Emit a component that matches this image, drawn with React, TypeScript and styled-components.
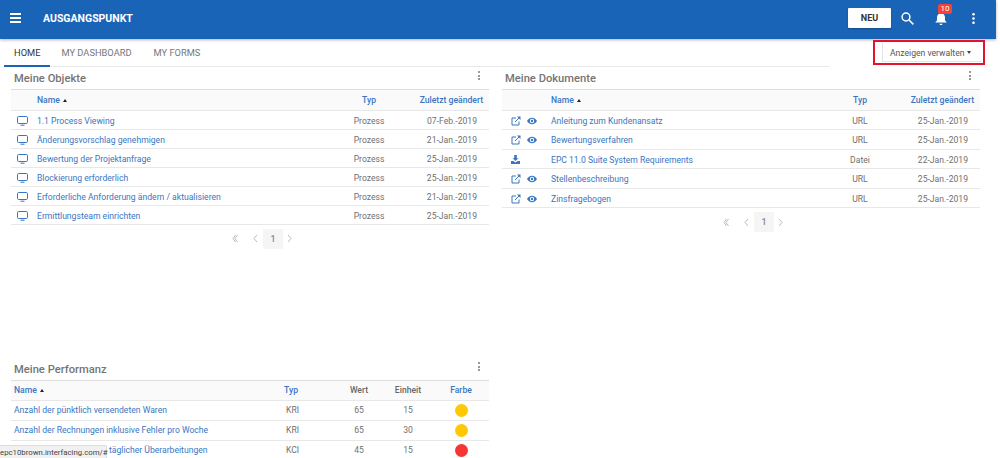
import React from "react";
import styled, { createGlobalStyle } from "styled-components";

const Global = createGlobalStyle`
  html, body { margin: 0; padding: 0; height: 458px; overflow: hidden; background: #fff; }
  body { font-family: Roboto, "Liberation Sans", sans-serif; }
  * { box-sizing: border-box; }
`;

const Page = styled.div`
  position: relative;
  width: 1000px;
  height: 458px;
  overflow: hidden;
`;

const Header = styled.header`
  width: 996px;
  height: 39px;
  background: #1a64b7;
  box-shadow: 0 1px 3px rgba(0, 0, 0, 0.3);
  display: flex;
  align-items: center;
  padding: 0 21px 3px 10px;
  color: #fff;
`;

const Burger = styled.div`
  width: 11px;
  display: flex;
  flex-direction: column;
  gap: 2px;
  span { display: block; height: 2px; background: #fff; }
`;

const Brand = styled.div`
  margin-left: 22px;
  font-size: 10.5px;
  font-weight: 700;
  flex: 1;
`;

const NewButton = styled.button`
  width: 43px;
  height: 20px;
  background: #fff;
  border: 0;
  border-radius: 1px;
  font: 700 9px Roboto, sans-serif;
  color: #333;
  padding: 0;
  box-shadow: 0 1px 2px rgba(0, 0, 0, 0.25);
`;

const IconSlot = styled.div<{ $ml: number }>`
  position: relative;
  margin-left: ${(p) => p.$ml}px;
  display: flex;
  svg { display: block; }
`;

const Badge = styled.span`
  position: absolute;
  top: -7px;
  left: 3px;
  width: 14px;
  height: 10px;
  background: #f44336;
  border-radius: 2px;
  color: #fff;
  font-size: 8px;
  line-height: 10px;
  text-align: center;
`;

const TabRow = styled.div`
  height: 28px;
  display: flex;
  align-items: stretch;
  padding-left: 4px;
`;

const Tabs = styled.nav`
  width: 825px;
  height: 28px;
  display: flex;
  border-bottom: 1px solid #e8e8e8;
`;

const Tab = styled.div<{ $active?: boolean }>`
  font-size: 9.3px;
  height: 28px;
  line-height: 27px;
  padding: 0 ${(p) => (p.$active ? 10 : 11)}px;
  color: ${(p) => (p.$active ? "#333" : "#777")};
  border-bottom: ${(p) => (p.$active ? "2px solid #1a64b7" : "none")};
`;

const ManageWrap = styled.div`
  position: absolute;
  left: 873px;
  top: 40px;
  width: 112px;
  height: 25px;
  border: 2px solid #e6112a;
  display: flex;
  align-items: center;
  padding-left: 7px;
  font-size: 8.6px;
  color: #555;
  white-space: nowrap;
  &::before {
    content: "";
    position: absolute;
    left: 7px;
    top: 1px;
    bottom: 1px;
    width: 1px;
    background: #e4e4e4;
  }
  &::after {
    content: "";
    position: absolute;
    left: 7px;
    right: 1px;
    bottom: 1px;
    height: 1px;
    background: #e4e4e4;
  }
`;

const ManageLabel = styled.span`
  margin-left: 8px;
`;

const Caret = styled.i`
  display: inline-block;
  margin-left: 3px;
  border-left: 2.5px solid transparent;
  border-right: 2.5px solid transparent;
  border-top: 3px solid #444;
`;

const Grid = styled.main`
  display: grid;
  grid-template-columns: 478px 478px;
  column-gap: 13px;
  padding-left: 11px;
`;

const Panel = styled.section<{ $h: number }>`
  height: ${(p) => p.$h}px;
`;

const PanelHead = styled.div`
  height: 23px;
  display: flex;
  align-items: center;
  justify-content: space-between;
  padding: 0 9px 0 3px;
  border-bottom: 1px solid #ddd;
  box-shadow: 0 1px 0 #e8e8e8;
`;

const PanelTitle = styled.h2`
  margin: 0;
  font-size: 11.2px;
  font-weight: 500;
  color: #757575;
`;

const Dots = styled.span`
  display: flex;
  flex-direction: column;
  gap: 1.5px;
  margin-top: -5px;
  i { width: 2px; height: 2px; background: #999; display: block; }
`;

const Table = styled.table`
  width: 100%;
  border-collapse: collapse;
  table-layout: fixed;
  font-size: 8.6px;
`;

const Th = styled.th<{ $align?: string; $w?: number; $plain?: boolean; $h: number; $pl?: number; $pr?: number }>`
  height: ${(p) => p.$h}px;
  width: ${(p) => (p.$w ? `${p.$w}px` : "auto")};
  text-align: ${(p) => p.$align ?? "left"};
  padding: 0 ${(p) => p.$pr ?? 0}px 0 ${(p) => p.$pl ?? 0}px;
  background: #fafafa;
  color: ${(p) => (p.$plain ? "#666" : "#3a75c2")};
  font-weight: 500;
  border-bottom: 1px solid #e8e8e8;
  white-space: nowrap;
`;

const Td = styled.td<{ $align?: string; $h: number; $pl?: number; $pr?: number; $link?: boolean; $nudge?: number }>`
  height: ${(p) => p.$h}px;
  text-align: ${(p) => p.$align ?? "left"};
  padding: ${(p) => p.$nudge ?? 0}px ${(p) => p.$pr ?? 0}px 0 ${(p) => p.$pl ?? 0}px;
  color: ${(p) => (p.$link ? "#3a75c2" : "#707070")};
  border-bottom: 1px solid #e8e8e8;
  white-space: nowrap;
  overflow: hidden;
`;

const Sort = styled.i`
  display: inline-block;
  margin-left: 1px;
  vertical-align: 1px;
  border-left: 2.5px solid transparent;
  border-right: 2.5px solid transparent;
  border-bottom: 3px solid #222;
`;

const Pager = styled.div<{ $right: number }>`
  display: flex;
  justify-content: flex-end;
  align-items: center;
  margin-top: 4px;
  height: 20px;
  padding-right: ${(p) => p.$right}px;
  color: #bbb;
`;

const PageNum = styled.span`
  width: 20px;
  height: 20px;
  margin: 0 4px 0 5px;
  background: #f5f5f5;
  color: #888;
  font-size: 9px;
  font-weight: 500;
  text-align: center;
  line-height: 20px;
`;

const Dot = styled.span<{ $c: string }>`
  display: inline-block;
  width: 13px;
  height: 13px;
  border-radius: 50%;
  background: ${(p) => p.$c};
  vertical-align: middle;
`;

const IconRow = styled.span`
  display: flex;
  align-items: center;
  gap: 6px;
`;

const StatusTip = styled.div`
  position: absolute;
  left: 0;
  bottom: 0;
  width: 107px;
  height: 13px;
  background: #f1f1f1;
  border: 1px solid #ddd;
  border-left: 0;
  border-bottom: 0;
  border-radius: 0 2px 0 0;
  font-size: 7.8px;
  line-height: 10px;
  color: #444;
  white-space: nowrap;
  text-align: right;
  padding: 2px 2px 0 0;
`;

const Monitor = () => (
  <svg width="11" height="10" viewBox="0 0 11 10" fill="none" stroke="#3a75c2" strokeWidth="1" style={{ display: "block" }}>
    <rect x="0.5" y="0.5" width="10" height="7" rx="1.2" />
    <path d="M3.5 9.2h4" />
  </svg>
);

const External = () => (
  <svg width="10" height="10" viewBox="0 0 10 10" fill="none" stroke="#3a75c2" strokeWidth="1">
    <path d="M5 2H1v7h7V5.5" />
    <path d="M4 6l4-4" />
    <path d="M6 .5h3.5V4z" fill="#3a75c2" stroke="none" />
  </svg>
);

const Eye = () => (
  <svg width="10" height="8" viewBox="0 0 10 8" fill="#3a75c2">
    <path d="M5 .8C2.8.8 1 2.2 0 4c1 1.8 2.8 3.2 5 3.2S9 5.8 10 4C9 2.2 7.2.8 5 .8zm0 5.4A2.2 2.2 0 1 1 5 1.8a2.2 2.2 0 0 1 0 4.4z" />
    <circle cx="5" cy="4" r="1.2" />
  </svg>
);

const Download = () => (
  <svg width="9" height="9" viewBox="0 0 9 9" fill="#3a75c2">
    <path d="M3.2 0h2.6v3.2h1.6L4.5 6 1.6 3.2h1.6z" />
    <path d="M0 6h2.2l2.3 1.4L6.8 6H9v3H0z" />
  </svg>
);

const PagerIcons = () => (
  <Pager $right={197}>
    <svg width="6" height="9" viewBox="0 0 6 9" fill="none" stroke="#bbb" strokeWidth="1"><path d="M3.500 1L1 4.500 3.500 8M5.500 1L3 4.500 5.500 8" /></svg>
    <svg width="5" height="9" viewBox="0 0 5 9" fill="none" stroke="#bbb" strokeWidth="1" style={{ marginLeft: 15 }}><path d="M4 1L1 4.500 4 8" /></svg>
    <PageNum>1</PageNum>
    <svg width="5" height="9" viewBox="0 0 5 9" fill="none" stroke="#bbb" strokeWidth="1"><path d="M1 1l3 3.500L1 8" /></svg>
  </Pager>
);

const objects = [
  ["1.1 Process Viewing", "07-Feb.-2019"],
  ["Änderungsvorschlag genehmigen", "21-Jan.-2019"],
  ["Bewertung der Projektanfrage", "25-Jan.-2019"],
  ["Blockierung erforderlich", "25-Jan.-2019"],
  ["Erforderliche Anforderung ändern / aktualisieren", "21-Jan.-2019"],
  ["Ermittlungsteam einrichten", "25-Jan.-2019"],
];

const docs = [
  ["Anleitung zum Kundenansatz", "URL", "25-Jan.-2019", "l"],
  ["Bewertungsverfahren", "URL", "25-Jan.-2019", "l"],
  ["EPC 11.0 Suite System Requirements", "Datei", "22-Jan.-2019", "d"],
  ["Stellenbeschreibung", "URL", "25-Jan.-2019", "l"],
  ["Zinsfragebogen", "URL", "25-Jan.-2019", "l"],
];

const perf = [
  ["Anzahl der pünktlich versendeten Waren", "KRI", "65", "15", "#ffc800"],
  ["Anzahl der Rechnungen inklusive Fehler pro Woche", "KRI", "65", "30", "#ffc800"],
  ["Dokumente nach Anzahl täglicher Überarbeitungen", "KCI", "45", "15", "#f83434"],
];

const Head = ({ title }: { title: string }) => (
  <PanelHead>
    <PanelTitle>{title}</PanelTitle>
    <Dots><i /><i /><i /></Dots>
  </PanelHead>
);

export default function App() {
  return (
    <Page>
      <Global />
      <Header>
        <Burger><span /><span /><span /></Burger>
        <Brand>AUSGANGSPUNKT</Brand>
        <NewButton>NEU</NewButton>
        <IconSlot $ml={10}>
          <svg width="13" height="13" viewBox="0 0 13 13" fill="none" stroke="#fff" strokeWidth="1.5">
            <circle cx="5" cy="5" r="3.9" />
            <path d="M8 8l4.400 4.400" />
          </svg>
        </IconSlot>
        <IconSlot $ml={21}>
          <svg width="12" height="14" viewBox="0 0 12 14" fill="#fff">
            <path d="M6 1a1 1 0 0 1 1 1v.4c2 .5 3 2.200 3 4v3l1.500 1.600v.5H.5V11L2 9.400v-3c0-1.800 1-3.500 3-4V2a1 1 0 0 1 1-1z" />
            <path d="M4.600 12.800h2.800A1.400 1.400 0 0 1 4.600 12.800z" />
          </svg>
          <Badge>10</Badge>
        </IconSlot>
        <IconSlot $ml={25}>
          <svg width="3" height="11" viewBox="0 0 3 11" fill="#fff">
            <circle cx="1.500" cy="1.300" r="1.300" />
            <circle cx="1.500" cy="5.500" r="1.300" />
            <circle cx="1.500" cy="9.700" r="1.300" />
          </svg>
        </IconSlot>
      </Header>
      <TabRow>
        <Tabs>
          <Tab $active>HOME</Tab>
          <Tab>MY DASHBOARD</Tab>
          <Tab>MY FORMS</Tab>
        </Tabs>
      </TabRow>
      <ManageWrap>
        <ManageLabel>Anzeigen verwalten</ManageLabel>
        <Caret />
      </ManageWrap>
      <Grid>
        <Panel $h={291}>
          <Head title="Meine Objekte" />
          <Table>
            <thead>
              <tr>
                <Th $h={20} $w={26} />
                <Th $h={20}>Name <Sort /></Th>
                <Th $h={20} $w={80} $align="center">Typ</Th>
                <Th $h={20} $w={80} $align="right" $pr={6}>Zuletzt geändert</Th>
              </tr>
            </thead>
            <tbody>
              {objects.map(([n, d]) => (
                <tr key={n}>
                  <Td $h={19} $pl={6} $nudge={2}><Monitor /></Td>
                  <Td $h={19} $link $nudge={2}>{n}</Td>
                  <Td $h={19} $align="center" $nudge={2}>Prozess</Td>
                  <Td $h={19} $align="right" $pr={12} $nudge={2}>{d}</Td>
                </tr>
              ))}
            </tbody>
          </Table>
          <PagerIcons />
        </Panel>
        <Panel $h={291}>
          <Head title="Meine Dokumente" />
          <Table>
            <thead>
              <tr>
                <Th $h={20} $w={49} />
                <Th $h={20}>Name <Sort /></Th>
                <Th $h={20} $w={80} $align="center">Typ</Th>
                <Th $h={20} $w={80} $align="right" $pr={6}>Zuletzt geändert</Th>
              </tr>
            </thead>
            <tbody>
              {docs.map(([n, t, d, k]) => (
                <tr key={n}>
                  <Td $h={19.5} $pl={9} $nudge={2}>
                    <IconRow>{k === "l" ? <><External /><Eye /></> : <Download />}</IconRow>
                  </Td>
                  <Td $h={19.5} $link $nudge={2}>{n}</Td>
                  <Td $h={19.5} $align="center" $nudge={2}>{t}</Td>
                  <Td $h={19.5} $align="right" $pr={12} $nudge={2}>{d}</Td>
                </tr>
              ))}
            </tbody>
          </Table>
          <PagerIcons />
        </Panel>
        <Panel $h={100}>
          <Head title="Meine Performanz" />
          <Table>
            <thead>
              <tr>
                <Th $h={19} $pl={3}>Name <Sort /></Th>
                <Th $h={19} $w={51}>Typ</Th>
                <Th $h={19} $w={48} $align="center" $plain>Wert</Th>
                <Th $h={19} $w={50} $align="center" $plain>Einheit</Th>
                <Th $h={19} $w={56} $align="center">Farbe</Th>
              </tr>
            </thead>
            <tbody>
              {perf.map(([n, t, v, u, c]) => (
                <tr key={n}>
                  <Td $h={20} $pl={3} $link>{n}</Td>
                  <Td $h={20} $pl={2}>{t}</Td>
                  <Td $h={20} $align="center">{v}</Td>
                  <Td $h={20} $align="center">{u}</Td>
                  <Td $h={20} $align="center"><Dot $c={c} /></Td>
                </tr>
              ))}
            </tbody>
          </Table>
        </Panel>
      </Grid>
      <StatusTip>epc10brown.interfacing.com/#</StatusTip>
    </Page>
  );
}
